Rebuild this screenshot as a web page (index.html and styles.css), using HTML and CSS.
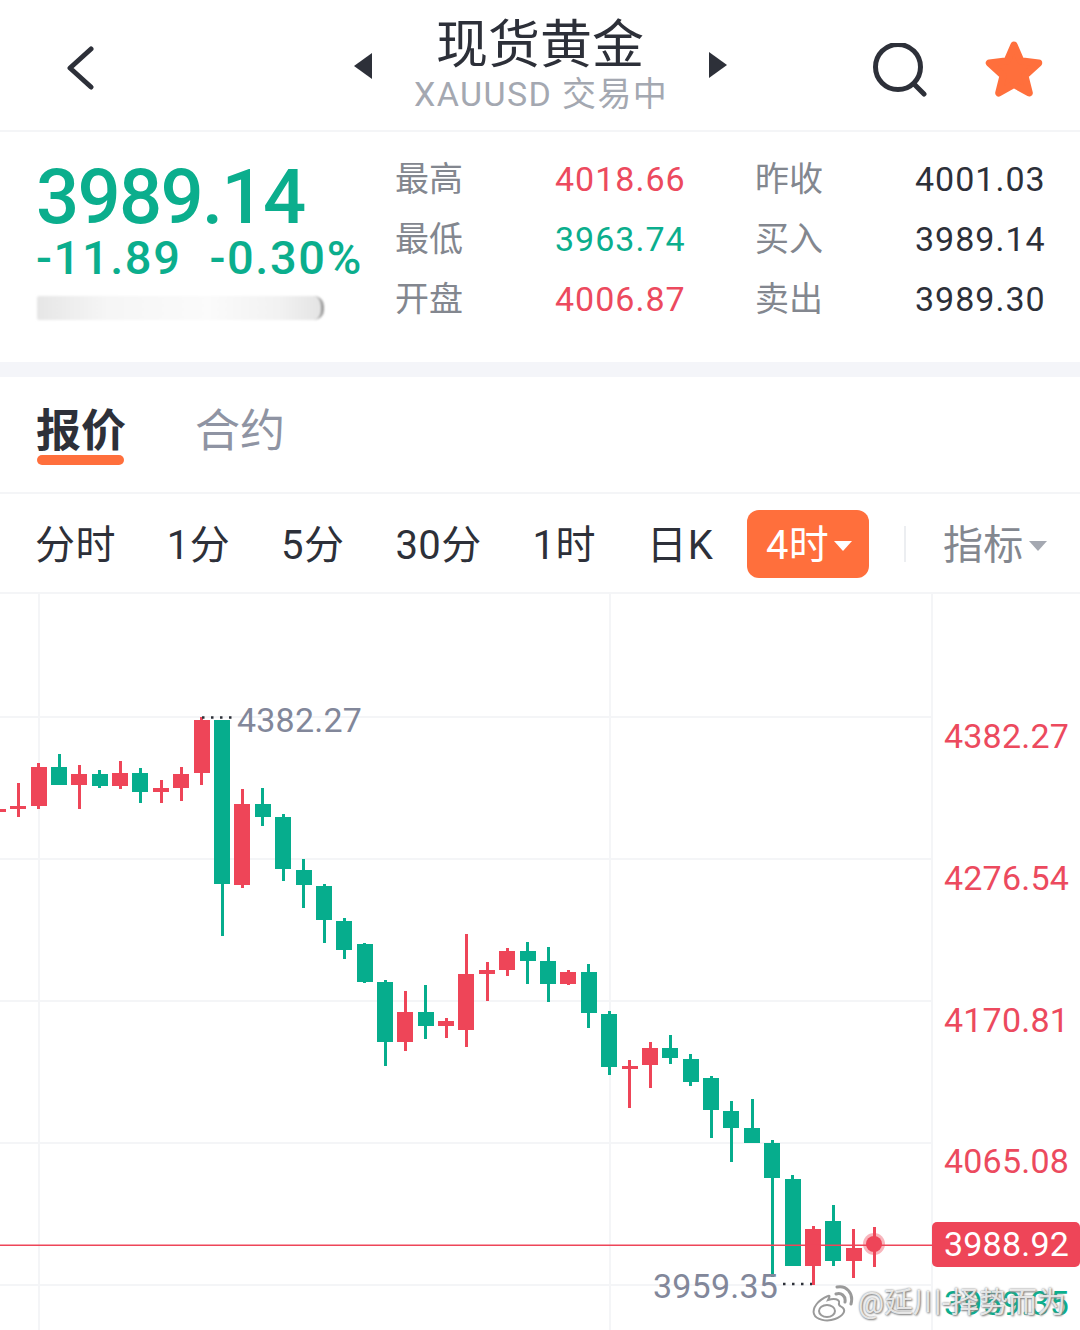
FILE: index.html
```html
<!DOCTYPE html>
<html lang="zh-CN">
<head>
  <meta charset="utf-8">
  <title>现货黄金</title>
  <link rel="stylesheet" href="styles.css">
</head>
<body>
  <div class="header">
    <div class="header-side">
      <svg class="icon-back" width="30" height="46" viewBox="0 0 30 46"><path d="M25 3 4 22 25 41" /></svg>
      <svg class="icon-arrow" width="18" height="26" viewBox="0 0 18 26"><path d="M18 0V26L0 13Z" /></svg>
    </div>
    <div class="title-block">
      <h1>现货黄金</h1>
      <div class="subtitle">XAUUSD 交易中</div>
    </div>
    <div class="header-side">
      <svg class="icon-arrow next" width="18" height="26" viewBox="0 0 18 26"><path d="M0 0V26L18 13Z" /></svg>
      <svg class="icon-search" width="54" height="54" viewBox="0 0 54 54"><circle cx="25" cy="24" r="22.5" /><path d="M41 41 51 51" /></svg>
      <svg class="icon-star" width="62" height="60" viewBox="0 0 60 58"><path d="M30 4 36.500 19.100 53.800 21.300 40.500 33.400 44.700 50.200 30 42 15.300 50.200 19.500 33.400 6.200 21.300 23.500 19.100Z" /></svg>
    </div>
  </div>

  <div class="quote">
    <div class="quote-main">
      <div class="price">3989.14</div>
      <div class="change"><span>-11.89</span><span>-0.30%</span></div>
      <div class="volume-bar"></div>
    </div>
    <div class="quote-grid">
      <span class="q-label">最高</span><span class="q-value red">4018.66</span><span class="q-label">昨收</span><span class="q-value">4001.03</span>
      <span class="q-label">最低</span><span class="q-value green">3963.74</span><span class="q-label">买入</span><span class="q-value">3989.14</span>
      <span class="q-label">开盘</span><span class="q-value red">4006.87</span><span class="q-label">卖出</span><span class="q-value">3989.30</span>
    </div>
  </div>

  <div class="tabs">
    <div class="tab active">报价</div>
    <div class="tab">合约</div>
  </div>

  <div class="periods">
    <span class="period">分时</span>
    <span class="period">1分</span>
    <span class="period">5分</span>
    <span class="period">30分</span>
    <span class="period">1时</span>
    <span class="period day">日K</span>
    <span class="period-btn"><span class="btn-text">4时</span><i class="caret"></i></span>
    <span class="divider"></span>
    <span class="indicator"><span class="btn-text">指标</span><i class="caret"></i></span>
  </div>

  <div class="chart">
    <svg class="chart-svg" width="1080" height="736" viewBox="0 594 1080 736">
      <g class="grid">
        <rect x="0" y="716" width="931" height="2" />
        <rect x="0" y="858" width="931" height="2" />
        <rect x="0" y="1000" width="931" height="2" />
        <rect x="0" y="1142" width="931" height="2" />
        <rect x="0" y="1284" width="931" height="2" />
        <rect x="38" y="594" width="2" height="736" />
        <rect x="609" y="594" width="2" height="736" />
        <rect x="931" y="594" width="2" height="736" />
      </g>
      <g class="down">
        <rect x="0" y="809" width="6" height="3" />
        <rect x="10" y="806" width="16" height="3" /><rect x="17" y="783" width="3" height="34" />
        <rect x="31" y="767" width="16" height="39" /><rect x="37" y="763" width="3" height="46" />
        <rect x="71" y="774" width="16" height="11" /><rect x="78" y="765" width="3" height="44" />
        <rect x="112" y="773" width="16" height="13" /><rect x="119" y="761" width="3" height="28" />
        <rect x="153" y="788" width="16" height="4" /><rect x="160" y="780" width="3" height="23" />
        <rect x="173" y="774" width="16" height="14" /><rect x="180" y="767" width="3" height="34" />
        <rect x="194" y="720" width="16" height="53" /><rect x="200" y="717" width="3" height="68" />
        <rect x="234" y="804" width="16" height="81" /><rect x="241" y="789" width="3" height="99" />
        <rect x="397" y="1012" width="16" height="30" /><rect x="404" y="991" width="3" height="60" />
        <rect x="438" y="1021" width="16" height="5" /><rect x="445" y="1018" width="3" height="20" />
        <rect x="458" y="974" width="16" height="56" /><rect x="465" y="934" width="3" height="113" />
        <rect x="479" y="970" width="16" height="4" /><rect x="486" y="962" width="3" height="39" />
        <rect x="499" y="951" width="16" height="19" /><rect x="506" y="948" width="3" height="28" />
        <rect x="560" y="972" width="16" height="12" /><rect x="567" y="970" width="3" height="15" />
        <rect x="622" y="1066" width="16" height="3" /><rect x="628" y="1060" width="3" height="48" />
        <rect x="642" y="1048" width="16" height="17" /><rect x="649" y="1042" width="3" height="46" />
        <rect x="805" y="1229" width="16" height="37" /><rect x="812" y="1226" width="3" height="59" />
        <rect x="846" y="1248" width="16" height="13" /><rect x="852" y="1229" width="3" height="49" />
        <rect x="873" y="1227" width="3" height="40" />
      </g>
      <g class="up">
        <rect x="51" y="767" width="16" height="18" /><rect x="58" y="754" width="3" height="31" />
        <rect x="92" y="774" width="16" height="12" /><rect x="98" y="770" width="3" height="18" />
        <rect x="132" y="773" width="16" height="19" /><rect x="139" y="768" width="3" height="35" />
        <rect x="214" y="720" width="16" height="164" /><rect x="221" y="720" width="3" height="216" />
        <rect x="255" y="804" width="16" height="13" /><rect x="261" y="788" width="3" height="38" />
        <rect x="275" y="817" width="16" height="52" /><rect x="282" y="814" width="3" height="67" />
        <rect x="296" y="870" width="16" height="15" /><rect x="302" y="859" width="3" height="49" />
        <rect x="316" y="886" width="16" height="34" /><rect x="323" y="884" width="3" height="59" />
        <rect x="336" y="921" width="16" height="29" /><rect x="343" y="918" width="3" height="41" />
        <rect x="357" y="944" width="16" height="38" /><rect x="363" y="943" width="3" height="40" />
        <rect x="377" y="982" width="16" height="60" /><rect x="384" y="980" width="3" height="86" />
        <rect x="418" y="1012" width="16" height="14" /><rect x="424" y="985" width="3" height="54" />
        <rect x="520" y="951" width="16" height="10" /><rect x="526" y="942" width="3" height="42" />
        <rect x="540" y="961" width="16" height="23" /><rect x="547" y="947" width="3" height="55" />
        <rect x="581" y="972" width="16" height="41" /><rect x="587" y="964" width="3" height="64" />
        <rect x="601" y="1014" width="16" height="53" /><rect x="608" y="1011" width="3" height="64" />
        <rect x="662" y="1048" width="16" height="10" /><rect x="669" y="1035" width="3" height="29" />
        <rect x="683" y="1059" width="16" height="23" /><rect x="689" y="1054" width="3" height="32" />
        <rect x="703" y="1078" width="16" height="32" /><rect x="710" y="1076" width="3" height="62" />
        <rect x="723" y="1111" width="16" height="17" /><rect x="730" y="1101" width="3" height="61" />
        <rect x="744" y="1128" width="16" height="15" /><rect x="751" y="1099" width="3" height="44" />
        <rect x="764" y="1143" width="16" height="35" /><rect x="771" y="1140" width="3" height="137" />
        <rect x="785" y="1179" width="16" height="87" /><rect x="791" y="1175" width="3" height="91" />
        <rect x="825" y="1221" width="16" height="40" /><rect x="832" y="1205" width="3" height="61" />
      </g>
      <path class="extreme-dots" d="M202 717.500H232M783 1284H812" />
      <rect class="last-line" x="0" y="1244.500" width="932" height="1.500" />
      <circle class="last-glow" cx="874" cy="1244" r="11" />
      <circle class="last-dot" cx="874" cy="1244" r="8" />
    </svg>

    <span class="extreme high">4382.27</span>
    <span class="extreme low">3959.35</span>

    <span class="axis a1">4382.27</span>
    <span class="axis a2">4276.54</span>
    <span class="axis a3">4170.81</span>
    <span class="axis a4">4065.08</span>
    <span class="last-price">3988.92</span>
    <span class="axis-low">3959.35</span>

    <div class="watermark">
      <svg width="44" height="40" viewBox="0 0 44 40"><path class="wm-body" d="M18 13C8 17 2 25 4 31 6 37 17 39 25 36 33 33 36 28 33 25 31 23 28 23 29 20 30 16 24 15 18 17 20 13 20 12 18 13Z" /><ellipse class="wm-eye" cx="17" cy="28" rx="8" ry="6" /><path class="wm-arc" d="M26 11C31 9 36 13 35 19M27 4C36 2 44 10 41 21" /></svg>
      <span>@延川-择势而为</span>
    </div>
  </div>
</body>
</html>
```

FILE: styles.css
```css
* {
  box-sizing: border-box;
}

body {
  width: 1080px;
  height: 1330px;
  margin: 0;
  overflow: hidden;
  background: #fff;
  color: #2d3039;
  font-family: Roboto, "Noto Sans CJK SC", sans-serif;
}

.header {
  display: grid;
  grid-template-columns: 1fr 252px 1fr;
  column-gap: 42px;
  height: 132px;
  border-bottom: 2px solid #f4f5f7;
}

.header-side {
  display: flex;
  align-items: center;
  height: 130px;
}

.header-side:first-child {
  justify-content: space-between;
  padding-left: 66px;
  padding-top: 2px;
}

.header-side svg {
  display: block;
}

.icon-back {
  margin-top: 5px;
}

.icon-back path {
  fill: none;
  stroke: #2d3039;
  stroke-width: 5;
  stroke-linecap: round;
  stroke-linejoin: round;
}

.icon-arrow path {
  fill: #2d3039;
}

.icon-arrow.next {
  margin-left: 1px;
}

.icon-search {
  margin-left: 146px;
  margin-top: 10px;
}

.icon-search circle,
.icon-search path {
  fill: none;
  stroke: #2d3039;
  stroke-width: 5;
  stroke-linecap: round;
}

.icon-star {
  margin-left: 56px;
  margin-top: 12px;
}

.icon-star path {
  fill: #ff6f3c;
  stroke: #ff6f3c;
  stroke-width: 7;
  stroke-linejoin: round;
}

.title-block {
  text-align: center;
  white-space: nowrap;
}

h1 {
  margin: 16px 0 0;
  font-size: 52px;
  font-weight: 400;
  line-height: 60px;
}

.subtitle {
  color: #a4a8b1;
  font-size: 34px;
  line-height: 40px;
  letter-spacing: 1.400px;
  margin-top: -2px;
}

.quote {
  display: flex;
  height: 230px;
  padding-left: 36px;
}

.quote-main {
  width: 359px;
}

.price {
  color: #0bae8d;
  font-size: 76px;
  font-weight: 500;
  line-height: 70px;
  letter-spacing: -1.700px;
  margin-top: 30px;
}

.change {
  display: flex;
  gap: 28px;
  color: #0bae8d;
  font-size: 47px;
  font-weight: 500;
  line-height: 50px;
  letter-spacing: 1.600px;
  margin-top: 1px;
}

.volume-bar {
  width: 287px;
  height: 24px;
  margin-top: 13px;
  margin-left: 1px;
  border-right: 3px solid #9a9a9a;
  border-radius: 2px 10px 10px 2px;
  background: linear-gradient(90deg, #e6e6e6, #f6f6f6 25%, #fbfbfb 60%, #f2f2f2 85%, #e4e4e4);
  filter: blur(1px);
}

.quote-grid {
  display: grid;
  grid-template-columns: 160px 200px 160px 1fr;
  grid-auto-rows: 60px;
  align-items: center;
  padding-top: 17px;
}

.q-label {
  padding-bottom: 6px;
  color: #83878f;
  font-size: 34px;
}

.q-value {
  font-size: 34px;
  letter-spacing: 1px;
}

.red {
  color: #ec4a5e;
}

.green {
  color: #0bae8d;
}

.tabs {
  display: flex;
  gap: 69px;
  height: 132px;
  padding-left: 36px;
  border-top: 15px solid #f4f5f9;
  border-bottom: 2px solid #f4f5f7;
}

.tab {
  position: relative;
  color: #8f94a3;
  font-size: 45px;
  line-height: 60px;
  margin-top: 25px;
}

.tab.active {
  color: #2d3039;
  font-weight: 700;
}

.tab.active:after {
  content: "";
  position: absolute;
  left: 1px;
  right: 2px;
  top: 53px;
  height: 10px;
  border-radius: 5px;
  background: #ff6f3c;
}

.periods {
  display: flex;
  align-items: center;
  gap: 51px;
  height: 100px;
  padding-left: 35px;
  padding-top: 2px;
  border-bottom: 2px solid #f4f5f7;
  font-size: 40px;
  letter-spacing: 0.400px;
}

.period,
.btn-text {
  padding-bottom: 4px;
}

.period.day {
  letter-spacing: 1px;
}

.period-btn {
  display: flex;
  align-items: center;
  width: 122px;
  height: 68px;
  margin-left: -18px;
  padding-left: 19px;
  border-radius: 12px;
  background: #ff6f3c;
  color: #fff;
}

.caret {
  display: block;
  width: 0;
  height: 0;
  margin-left: 5px;
  margin-top: 4px;
  border-left: 9px solid transparent;
  border-right: 9px solid transparent;
  border-top: 10px solid #fff;
}

.divider {
  width: 2px;
  height: 36px;
  margin-left: -16px;
  background: #eceef1;
}

.indicator {
  display: flex;
  align-items: center;
  margin-left: -14px;
  color: #83878f;
}

.indicator .caret {
  border-top-color: #a4a8b1;
}

.chart {
  position: relative;
  height: 736px;
}

.chart-svg {
  display: block;
}

.grid rect {
  fill: #f4f5f7;
}

.down rect {
  fill: #ee4558;
}

.up rect {
  fill: #06ad8d;
}

.extreme-dots {
  fill: none;
  stroke: #2d3039;
  stroke-width: 2.500;
  stroke-dasharray: 2.500 6.500;
}

.last-line {
  fill: #ee4558;
}

.last-glow {
  fill: #ee4558;
  opacity: 0.4;
}

.last-dot {
  fill: #ee4558;
}

.extreme {
  position: absolute;
  color: #82879a;
  font-size: 34px;
  line-height: 40px;
  letter-spacing: 0.200px;
}

.extreme.high {
  left: 237px;
  top: 106px;
}

.extreme.low {
  left: 653px;
  top: 672px;
}

.axis {
  position: absolute;
  left: 944px;
  color: #ec4a5e;
  font-size: 34px;
  line-height: 40px;
  letter-spacing: 0.200px;
}

.a1 { top: 122px; }
.a2 { top: 264px; }
.a3 { top: 406px; }
.a4 { top: 547px; }

.last-price {
  position: absolute;
  left: 932px;
  top: 628px;
  width: 148px;
  height: 45px;
  padding-left: 12px;
  border-radius: 5px;
  background: #ee4558;
  color: #fff;
  font-size: 34px;
  line-height: 45px;
  letter-spacing: 0.200px;
}

.axis-low {
  position: absolute;
  left: 944px;
  top: 689px;
  color: #0bae8d;
  font-size: 34px;
  line-height: 40px;
  letter-spacing: 0.200px;
}

.watermark {
  position: absolute;
  left: 810px;
  top: 689px;
  display: flex;
  align-items: center;
  gap: 4px;
  color: rgba(255, 255, 255, 0.8);
  font-size: 29px;
  line-height: 40px;
  white-space: nowrap;
  text-shadow: 0 0 2px #777, 1px 1px 2px #888;
}

.wm-body,
.wm-eye,
.wm-arc {
  fill: #fff;
  stroke: #9a9a9a;
  stroke-width: 2;
}

.wm-arc {
  fill: none;
  stroke-width: 3;
  stroke-linecap: round;
}
```
